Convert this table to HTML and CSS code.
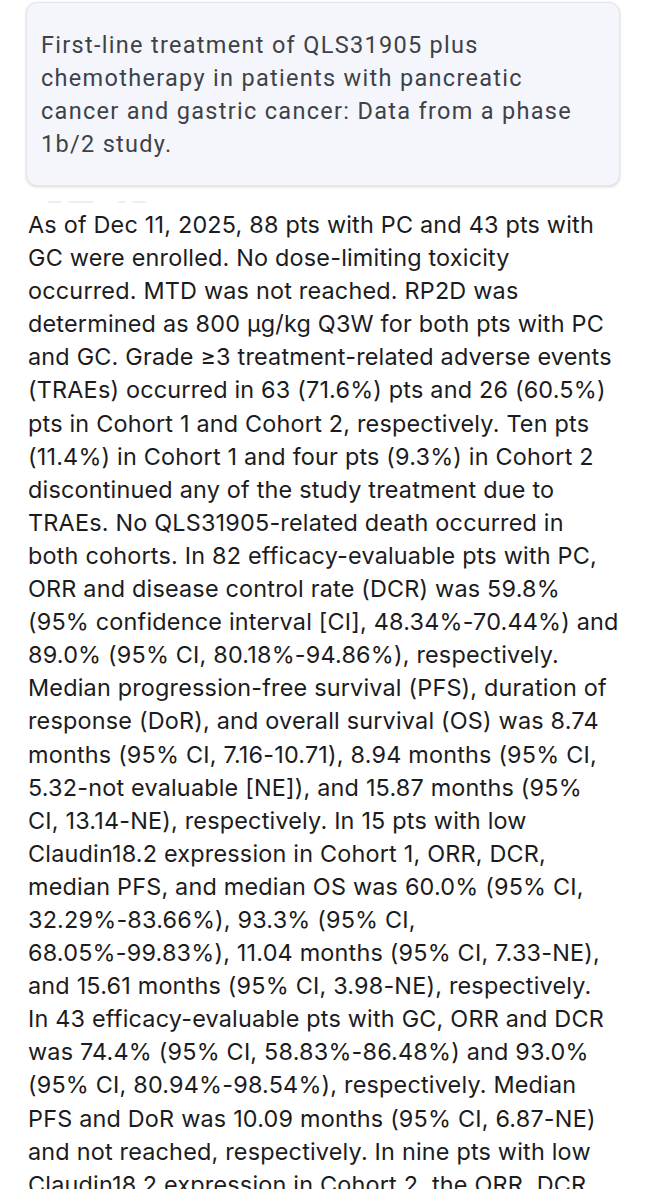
FILE: index.html
```html
<!DOCTYPE html>
<html lang="en">
<head>
<meta charset="utf-8">
<title>QLS31905 abstract</title>
<link rel="stylesheet" href="styles.css">
</head>
<body>
<div class="page">
  <div class="card">
    <p class="card-title">First-line treatment of QLS31905 plus<br>chemotherapy in patients with pancreatic<br>cancer and gastric cancer: Data from a phase<br>1b/2 study.</p>
  </div>
  <div class="ghost"><i class="g1"></i><i class="g2"></i><i class="g3"></i><i class="g4"></i></div>
  <p class="body-text">As of Dec 11, 2025, 88 pts with PC and 43 pts with<br>GC were enrolled. No dose-limiting toxicity<br>occurred. MTD was not reached. RP2D was<br>determined as 800 µg/kg Q3W for both pts with PC<br>and GC. Grade ≥3 treatment-related adverse events<br>(TRAEs) occurred in 63 (71.6%) pts and 26 (60.5%)<br>pts in Cohort 1 and Cohort 2, respectively. Ten pts<br>(11.4%) in Cohort 1 and four pts (9.3%) in Cohort 2<br>discontinued any of the study treatment due to<br>TRAEs. No QLS31905-related death occurred in<br>both cohorts. In 82 efficacy-evaluable pts with PC,<br>ORR and disease control rate (DCR) was 59.8%<br>(95% confidence interval [CI], 48.34%-70.44%) and<br>89.0% (95% CI, 80.18%-94.86%), respectively.<br>Median progression-free survival (PFS), duration of<br>response (DoR), and overall survival (OS) was 8.74<br>months (95% CI, 7.16-10.71), 8.94 months (95% CI,<br>5.32-not evaluable [NE]), and 15.87 months (95%<br>CI, 13.14-NE), respectively. In 15 pts with low<br>Claudin18.2 expression in Cohort 1, ORR, DCR,<br>median PFS, and median OS was 60.0% (95% CI,<br>32.29%-83.66%), 93.3% (95% CI,<br>68.05%-99.83%), 11.04 months (95% CI, 7.33-NE),<br>and 15.61 months (95% CI, 3.98-NE), respectively.<br>In 43 efficacy-evaluable pts with GC, ORR and DCR<br>was 74.4% (95% CI, 58.83%-86.48%) and 93.0%<br>(95% CI, 80.94%-98.54%), respectively. Median<br>PFS and DoR was 10.09 months (95% CI, 6.87-NE)<br>and not reached, respectively. In nine pts with low<br>Claudin18.2 expression in Cohort 2, the ORR, DCR</p>
</div>
</body>
</html>
```

FILE: styles.css
```css
html, body {
  margin: 0;
  padding: 0;
  background: #ffffff;
}
.page {
  width: 646px;
  height: 1189px;
  overflow: hidden;
  padding-top: 2px;
  box-sizing: border-box;
}
.card {
  margin-left: 26px;
  width: 594px;
  box-sizing: border-box;
  background: #f4f6fc;
  border: 1px solid #e3e5ea;
  border-radius: 11px;
  box-shadow: 0 1px 3px rgba(0, 0, 0, 0.16);
  padding: 26px 14px 24px 14px;
}
.card-title {
  margin: 0;
  font-family: Roboto, "Noto Sans", sans-serif;
  font-size: 23.5px;
  line-height: 33px;
  color: #3e4247;
  letter-spacing: 1.3px;
  white-space: nowrap;
}
.ghost {
  display: flex;
  gap: 6px;
  align-items: center;
  margin-left: 48px;
  margin-top: 14px;
  height: 3px;
}
.ghost i {
  display: block;
  height: 2px;
  background: #eeeef0;
  border-radius: 1px;
}
.ghost .g1 { width: 14px; }
.ghost .g2 { width: 26px; }
.ghost .g3 { width: 8px; margin-left: 18px; }
.ghost .g4 { width: 14px; }
.body-text {
  margin: 5px 0 0 28px;
  font-family: Inter, "Liberation Sans", sans-serif;
  font-size: 23.4px;
  line-height: 33.1px;
  letter-spacing: 0.2px;
  color: #1c1c1e;
  white-space: nowrap;
}
```
